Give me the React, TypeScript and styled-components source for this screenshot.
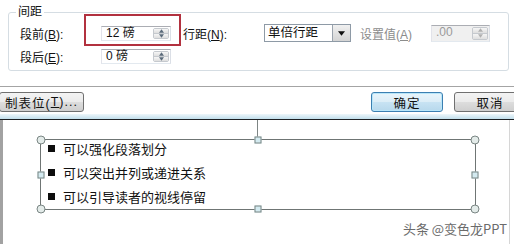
import React from 'react';
import styled, { createGlobalStyle, css } from 'styled-components';

const GlobalStyle = createGlobalStyle`
  html, body {
    margin: 0;
    padding: 0;
    background: #ffffff;
  }
  body {
    width: 514px;
    height: 244px;
    overflow: hidden;
    font-family: "Liberation Sans", "Noto Sans CJK SC", sans-serif;
  }
`;

const Page = styled.div`
  display: flex;
  flex-direction: column;
  width: 514px;
  height: 244px;
  overflow: hidden;
`;

const Dialog = styled.div`
  display: flex;
  flex-direction: column;
  height: 120px;
  padding-top: 5px;
  box-sizing: border-box;
  background: #ffffff;
  font-size: 12px;
  color: #111;
`;

const Group = styled.fieldset`
  margin: 0 5px 0 8px;
  padding: 0 0 5px 11px;
  border: 1px solid #d5dde3;
  border-radius: 3px;
  min-width: 0;
`;

const Legend = styled.legend`
  margin-left: -4px;
  padding: 0 2px;
  line-height: 14px;
  font-size: 12px;
`;

const Row = styled.div`
  position: relative;
  display: flex;
  align-items: center;
  height: 18px;
  margin-top: ${(p: { $first?: boolean }) => (p.$first ? '5px' : '5px')};
`;

const Label = styled.span<{ $w: number; $muted?: boolean }>`
  width: ${(p) => p.$w}px;
  flex: none;
  white-space: nowrap;
  color: ${(p) => (p.$muted ? '#8c8c8c' : '#111')};

  u {
    text-decoration: underline;
  }
`;

const Gap = styled.span<{ $w: number }>`
  width: ${(p) => p.$w}px;
  flex: none;
`;

const SpinBox = styled.div<{ $w: number; $disabled?: boolean }>`
  display: flex;
  width: ${(p) => p.$w}px;
  height: ${(p) => (p.$disabled ? 17 : 15)}px;
  box-sizing: border-box;
  border: 1px solid;
  border-color: #abadb3 #dbdfe6 #e3e9ef #e2e3ea;
  background: ${(p) => (p.$disabled ? '#f0f0f0' : '#ffffff')};
  flex: none;
`;

const SpinText = styled.span<{ $disabled?: boolean }>`
  flex: 1;
  padding-left: 4px;
  line-height: 13px;
  font-size: 12px;
  color: ${(p) => (p.$disabled ? '#9a9a9a' : '#111')};
  white-space: pre;
`;

const SpinButtons = styled.div`
  display: flex;
  flex-direction: column;
  width: 14px;
  margin: 1px 1px 1px 0;
  border: 1px solid #c5c9ce;
  border-radius: 2px;
  overflow: hidden;
`;

const SpinHalf = styled.div`
  flex: 1;
  display: flex;
  align-items: center;
  justify-content: center;
  background: linear-gradient(#f6f6f6, #dedede);

  & + & {
    border-top: 1px solid #c5c9ce;
  }
`;

const Select = styled.div`
  display: flex;
  width: 87px;
  height: 18px;
  box-sizing: border-box;
  border: 1px solid #8e9aa6;
  background: #fff;
  flex: none;
`;

const SelectText = styled.span`
  flex: 1;
  padding-left: 3px;
  line-height: 16px;
  font-size: 12.5px;
`;

const SelectButton = styled.div`
  display: flex;
  align-items: center;
  justify-content: center;
  width: 17px;
  border-left: 1px solid #9aa3ad;
  background: linear-gradient(#f0f0f0, #d4d4d4);
`;

const Highlight = styled.div`
  position: absolute;
  left: 64px;
  top: -10px;
  width: 97px;
  height: 32px;
  box-sizing: border-box;
  border: 2px solid #b2313f;
  pointer-events: none;
`;

const Divider = styled.div`
  height: 1px;
  margin-top: 15px;
  background: #a4a4a4;
`;

const ButtonBar = styled.div`
  display: flex;
  align-items: center;
  gap: 11px;
  height: 20px;
  margin-top: 5px;
  overflow: hidden;
`;

const Spacer = styled.div`
  flex: 1;
`;

const Button = styled.div<{ $w: number; $primary?: boolean; $edge?: 'left' | 'right' }>`
  display: flex;
  align-items: center;
  justify-content: center;
  width: ${(p) => p.$w}px;
  height: 20px;
  box-sizing: border-box;
  flex: none;
  border: 1px solid #707070;
  border-radius: 3px;
  background: linear-gradient(#f3f3f3 0%, #ebebeb 49%, #dddddd 50%, #cfcfcf 100%);
  font-size: 12.5px;
  letter-spacing: 1px;
  ${(p) => p.$edge === 'left' && css`margin-left: -1px;`}
  ${(p) => p.$edge === 'right' && css`margin-right: -12px;`}
  ${(p) =>
    p.$primary &&
    css`
      border-color: #3c7fb1;
      box-shadow: inset 0 0 0 1px #b8e6f9;
      background: linear-gradient(#e9f5fb 0%, #dcedf7 49%, #c8e3f3 50%, #b7d8ec 100%);
    `}
`;

const BlueBand = styled.div`
  height: 5px;
  margin-top: 2px;
  background: linear-gradient(#eef7fb, #c2dfec);
`;

const DarkLine = styled.div`
  height: 1px;
  background: #1c1f22;
`;

const Canvas = styled.div`
  position: relative;
  flex: 1;
  margin-right: 4px;
  border-left: 3px solid #a2a2a2;
  border-right: 1px solid #d6d6d6;
  background: #ffffff;
`;

const TextFrame = styled.div`
  position: relative;
  width: 436px;
  height: 71px;
  margin: 19px 0 0 37px;
  box-sizing: border-box;
  border: 1px solid #6f7574;
`;

const RotateStem = styled.div`
  position: absolute;
  left: 216px;
  top: -20px;
  width: 1px;
  height: 20px;
  background: #7d8584;
`;

const Handle = styled.div<{ $round?: boolean; $x: string; $y: string }>`
  position: absolute;
  left: ${(p) => p.$x};
  top: ${(p) => p.$y};
  width: ${(p) => (p.$round ? 9 : 7)}px;
  height: ${(p) => (p.$round ? 9 : 7)}px;
  box-sizing: border-box;
  transform: translate(-50%, -50%);
  border: 1px solid #7a8684;
  border-radius: ${(p) => (p.$round ? '50%' : '0')};
  background: ${(p) => (p.$round ? '#e3ebe9' : '#d3eaf0')};
`;

const List = styled.ul`
  margin: -4px 0 0;
  padding: 0 0 0 7px;
  list-style: none;
  font-family: "Noto Sans CJK SC", sans-serif;
  font-size: 13px;
  color: #111;
`;

const Item = styled.li`
  display: flex;
  align-items: center;
  height: 24px;
`;

const Bullet = styled.span`
  width: 7px;
  height: 7px;
  margin-right: 8px;
  background: #0d0d0d;
  flex: none;
`;

const Watermark = styled.div`
  position: absolute;
  right: 2px;
  bottom: 6px;
  font-family: "Noto Sans CJK SC", sans-serif;
  font-size: 13px;
  color: #6b6b6b;
  text-shadow: 0 0 1px rgba(255, 255, 255, 0.9);
`;

const Arrow = ({ up, size = 5, color = '#666' }: { up?: boolean; size?: number; color?: string }) => (
  <svg width={size} height={Math.ceil(size / 2) + 1} viewBox="0 0 6 4">
    <path d={up ? 'M0 4 L3 0 L6 4 Z' : 'M0 0 L6 0 L3 4 Z'} fill={color} />
  </svg>
);

const Spin = ({ w, value, disabled }: { w: number; value: string; disabled?: boolean }) => (
  <SpinBox $w={w} $disabled={disabled}>
    <SpinText $disabled={disabled}>{value}</SpinText>
    <SpinButtons>
      <SpinHalf>
        <Arrow up color={disabled ? '#b0b0b0' : '#5a6a7a'} />
      </SpinHalf>
      <SpinHalf>
        <Arrow color={disabled ? '#b0b0b0' : '#5a6a7a'} />
      </SpinHalf>
    </SpinButtons>
  </SpinBox>
);

const items = ['可以强化段落划分', '可以突出并列或递进关系', '可以引导读者的视线停留'];

export default function App() {
  return (
    <Page>
      <GlobalStyle />
      <Dialog>
        <Group>
          <Legend>间距</Legend>
          <Row $first>
            <Label $w={81}>
              段前(<u>B</u>):
            </Label>
            <Spin w={70} value="12 磅" />
            <Gap $w={12} />
            <Label $w={81}>
              行距(<u>N</u>):
            </Label>
            <Select>
              <SelectText>单倍行距</SelectText>
              <SelectButton>
                <Arrow size={7} color="#111" />
              </SelectButton>
            </Select>
            <Gap $w={9} />
            <Label $w={71} $muted>
              设置值(<u>A</u>)
            </Label>
            <Spin w={59} value=".00" disabled />
            <Highlight />
          </Row>
          <Row>
            <Label $w={81}>
              段后(<u>E</u>):
            </Label>
            <Spin w={70} value="0 磅" />
          </Row>
        </Group>
        <Divider />
        <ButtonBar>
          <Button $w={85} $edge="left">
            制表位(<u>T</u>)...
          </Button>
          <Spacer />
          <Button $w={72} $primary>
            确定
          </Button>
          <Button $w={72} $edge="right">
            取消
          </Button>
        </ButtonBar>
        <BlueBand />
        <DarkLine />
      </Dialog>
      <Canvas>
        <TextFrame>
          <RotateStem />
          <Handle $round $x="0" $y="0" />
          <Handle $x="50%" $y="0" />
          <Handle $round $x="100%" $y="0" />
          <Handle $x="0" $y="50%" />
          <Handle $x="100%" $y="50%" />
          <Handle $round $x="0" $y="100%" />
          <Handle $x="50%" $y="100%" />
          <Handle $round $x="100%" $y="100%" />
          <List>
            {items.map((t) => (
              <Item key={t}>
                <Bullet />
                {t}
              </Item>
            ))}
          </List>
        </TextFrame>
        <Watermark>头条 @变色龙PPT</Watermark>
      </Canvas>
    </Page>
  );
}
